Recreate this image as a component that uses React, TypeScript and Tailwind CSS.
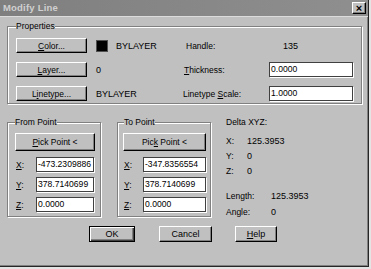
import React from 'react';

const raised = 'bg-[#c0c0c0] border border-t-white border-l-white border-r-black border-b-black shadow-[inset_-1px_-1px_0_#808080] flex items-center justify-center';
const field = 'bg-white border border-[#404040] shadow-[1px_1px_0_#fff] flex items-center pl-[1px] text-[8.6px] leading-none overflow-hidden whitespace-nowrap';
const group = 'border border-[#808080] shadow-[inset_1px_1px_0_#fff,1px_1px_0_#fff]';
const legend = 'bg-[#c0c0c0] px-0 leading-[10px]';

const Field: React.FC<{ value: string; className: string }> = ({ value, className }) => (
    <div className={`${field} ${className}`}>{value}</div>
);

const Coord: React.FC<{ axis: string; value: string; labelW: string; fieldW: string }> = ({ axis, value, labelW, fieldW }) => (
    <div className="flex items-center h-[15px]">
        <span className={`${labelW} pl-[1px]`}><u className="underline-offset-[1px]">{axis}</u>:</span>
        <Field value={value} className={`${fieldW} h-[15px]`} />
    </div>
);

export default function App() {
    return (
        <div className="w-[371px] h-[269px] bg-[#e4e4e4] text-black text-[8.5px] leading-[10px]" style={{ fontFamily: '"Liberation Sans", Arial, sans-serif' }}>
            <div className="w-[369px] h-[267px] bg-[#c0c0c0] border-r border-b border-[#262626] shadow-[inset_-1px_-1px_0_#808080] flex flex-col">
                {/* title bar */}
                <div className="h-[17px] flex items-center justify-between pl-[3px] pr-[2px] bg-gradient-to-r from-[#7f7f7f] to-[#8f8f8f] border-b border-[#dcdcdc]">
                    <span className="text-[9.5px] font-bold text-[#d0d0d0] tracking-[0.2px]">Modify Line</span>
                    <div className={`${raised} w-[14px] h-[12px] text-[11px] font-bold leading-none`}>×</div>
                </div>

                <div className="flex flex-col pl-[7px]">
                    {/* Properties */}
                    <fieldset className={`${group} mt-[4px] w-[355px] pl-[8px] pt-[7px] pb-[2px]`}>
                        <legend className={legend}>Properties</legend>
                        <div className="flex flex-col gap-[9px]">
                            <div className="flex items-center h-[15px]">
                                <div className={`${raised} w-[71px] h-[15px]`}><span><u className="underline-offset-[1px]">C</u>olor...</span></div>
                                <div className="w-[88px] ml-[9px] flex items-center">
                                    <div className="w-[12px] h-[12px] bg-black border border-[#505050]" />
                                    <span className="ml-[8px] text-[9px]">BYLAYER</span>
                                </div>
                                <span className="w-[85px] pl-[2px]">Handle:</span>
                                <span className="pl-[14px] text-[9px]">135</span>
                            </div>
                            <div className="flex items-center h-[15px]">
                                <div className={`${raised} w-[71px] h-[15px]`}><span><u className="underline-offset-[1px]">L</u>ayer...</span></div>
                                <div className="w-[88px] ml-[9px] text-[9px]">0</div>
                                <span className="w-[85px]"><u className="underline-offset-[1px]">T</u>hickness:</span>
                                <Field value="0.0000" className="w-[84px] h-[15px]" />
                            </div>
                            <div className="flex items-center h-[15px]">
                                <div className={`${raised} w-[71px] h-[15px]`}><span>L<u className="underline-offset-[1px]">i</u>netype...</span></div>
                                <div className="w-[88px] ml-[9px] text-[9px]">BYLAYER</div>
                                <span className="w-[85px] -ml-[1px]">Linetype <u className="underline-offset-[1px]">S</u>cale:</span>
                                <Field value="1.0000" className="w-[84px] h-[15px] ml-[1px]" />
                            </div>
                        </div>
                    </fieldset>

                    <div className="flex mt-[13px]">
                        {/* From Point */}
                        <fieldset className={`${group} w-[94px] pl-[7px] pt-[6px] pb-[4px]`}>
                            <legend className={legend}>From Point</legend>
                            <div className={`${raised} w-[80px] h-[18px]`}><span><u className="underline-offset-[1px]">P</u>ick Point &lt;</span></div>
                            <div className="flex flex-col gap-[5px] mt-[6px]">
                                <Coord axis="X" value="-473.2309886" labelW="w-[21px]" fieldW="w-[58px]" />
                                <Coord axis="Y" value="378.7140699" labelW="w-[21px]" fieldW="w-[58px]" />
                                <Coord axis="Z" value="0.0000" labelW="w-[21px]" fieldW="w-[58px]" />
                            </div>
                        </fieldset>

                        {/* To Point */}
                        <fieldset className={`${group} w-[94px] ml-[16px] pl-[5px] pt-[6px] pb-[4px]`}>
                            <legend className={`${legend} ml-[1px]`}>To Point</legend>
                            <div className={`${raised} w-[83px] h-[18px]`}><span>Pic<u className="underline-offset-[1px]">k</u> Point &lt;</span></div>
                            <div className="flex flex-col gap-[5px] mt-[6px]">
                                <Coord axis="X" value="-347.8356554" labelW="w-[20px]" fieldW="w-[63px]" />
                                <Coord axis="Y" value="378.7140699" labelW="w-[20px]" fieldW="w-[63px]" />
                                <Coord axis="Z" value="0.0000" labelW="w-[20px]" fieldW="w-[63px]" />
                            </div>
                        </fieldset>

                        {/* Delta */}
                        <div className="flex flex-col ml-[15px]">
                            <span>Delta XYZ:</span>
                            <div className="flex flex-col gap-[5px] mt-[9px]">
                                <div className="flex"><span className="w-[21px]">X:</span><span className="text-[9px]">125.3953</span></div>
                                <div className="flex"><span className="w-[21px]">Y:</span><span className="text-[9px]">0</span></div>
                                <div className="flex"><span className="w-[21px]">Z:</span><span className="text-[9px]">0</span></div>
                            </div>
                            <div className="flex flex-col gap-[6px] mt-[15px]">
                                <div className="flex"><span className="w-[45px]">Length:</span><span className="text-[9px]">125.3953</span></div>
                                <div className="flex"><span className="w-[45px]">Angle:</span><span className="text-[9px]">0</span></div>
                            </div>
                        </div>
                    </div>

                    {/* buttons */}
                    <div className="flex mt-[9px] ml-[82px] gap-[24px]">
                        <div className="w-[46px] h-[16px] bg-[#c0c0c0] border border-black shadow-[inset_1px_1px_0_#fff,inset_-1px_-1px_0_#404040,inset_-2px_-2px_0_#808080] flex items-center justify-center text-[9px]">OK</div>
                        <div className={`${raised} w-[53px] h-[16px] text-[9px]`}>Cancel</div>
                        <div className={`${raised} w-[42px] h-[16px] text-[9px] -ml-[1px]`}><span><u className="underline-offset-[1px]">H</u>elp</span></div>
                    </div>
                </div>
            </div>
        </div>
    );
}
